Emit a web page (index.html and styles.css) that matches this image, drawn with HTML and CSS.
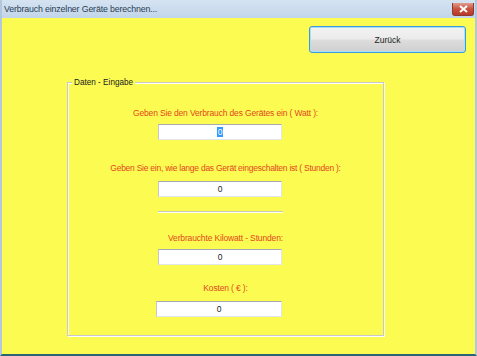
FILE: index.html
```html
<!DOCTYPE html>
<html lang="de">
<head>
    <meta charset="UTF-8">
    <title>Verbrauch einzelner Geräte berechnen...</title>
    <link rel="stylesheet" href="styles.css">
</head>
<body>
    <div class="window">
        <div class="titlebar">
            <span class="title">Verbrauch einzelner Geräte berechnen...</span>
            <button class="close">
                <svg width="9" height="8" viewBox="0 0 9 8">
                    <path d="M1 1 L8 7 M8 1 L1 7" stroke="#fff" stroke-width="2"/>
                </svg>
            </button>
        </div>
        <div class="content">
            <div class="top-row">
                <button class="btn-back">Zurück</button>
            </div>
            <div class="group">
                <span class="legend">Daten - Eingabe</span>
                <div class="label first">Geben Sie den Verbrauch des Gerätes ein ( Watt ):</div>
                <div class="field gap-small"><span class="sel">0</span></div>
                <div class="label second">Geben Sie ein, wie lange das Gerät eingeschalten ist ( Stunden ):</div>
                <div class="field">0</div>
                <div class="divider"></div>
                <div class="label after-line">Verbrauchte Kilowatt - Stunden:</div>
                <div class="field gap-small">0</div>
                <div class="label last">Kosten ( € ):</div>
                <div class="field wide">0</div>
            </div>
        </div>
    </div>
</body>
</html>
```

FILE: styles.css
```css
body {
    margin: 0;
    font-family: 'Liberation Sans', Arial, sans-serif;
}
.window {
    width: 477px;
    height: 356px;
    box-sizing: border-box;
    display: flex;
    flex-direction: column;
    background: #c9d9ea;
    border-left: 2px solid #b4c8dc;
    border-right: 2px solid #b4c8dc;
    border-bottom: 2px solid #2b6474;
}
.titlebar {
    height: 18px;
    display: flex;
    justify-content: space-between;
    align-items: flex-start;
    background: linear-gradient(#d5e3f1, #c2d5e9);
}
.title {
    font-family: 'Liberation Sans', Arial, sans-serif;
    font-size: 8.8px;
    color: #2a3d55;
    margin: 4px 0 0 2px;
    letter-spacing: -0.15px;
}
.close {
    width: 22px;
    height: 13px;
    margin: 3px 1px 0 0;
    padding: 0;
    border: 1px solid #8a3a30;
    border-top: none;
    border-radius: 0 0 3px 3px;
    background: linear-gradient(#e19c8e, #c8503c 50%, #b9382a);
    display: flex;
    align-items: center;
    justify-content: center;
}
.content {
    flex: 1;
    background: #fbfb52;
    padding: 8px 9px 0 0;
}
.top-row {
    display: flex;
    justify-content: flex-end;
}
.btn-back {
    width: 157px;
    height: 27px;
    border: 1px solid #3c9ad8;
    border-radius: 3px;
    box-shadow: inset 0 0 0 1px #a8e0f8;
    background: linear-gradient(#f3f3f3 0%, #ebebeb 48%, #dddddd 52%, #cfcfcf 100%);
    font-family: 'Liberation Sans', Arial, sans-serif;
    font-size: 8.5px;
    color: #222;
}
.group {
    position: relative;
    width: 317px;
    height: 254px;
    box-sizing: border-box;
    margin: 29px 0 0 65px;
    border: 1px solid #c8c8c8;
    box-shadow: inset 1px 1px 0 #ffffff, 1px 1px 0 #ffffff;
    display: flex;
    flex-direction: column;
    align-items: center;
}
.legend {
    position: absolute;
    top: -6px;
    left: 4px;
    padding: 0 2px;
    background: #fbfb52;
    font-size: 8.2px;
    line-height: 11px;
    color: #222;
}
.label {
    font-size: 8.5px;
    letter-spacing: -0.15px;
    line-height: 13px;
    color: #e4481e;
    margin-top: 20px;
    text-align: center;
}
.label.first {
    margin-top: 24px;
}
.label.second {
    margin-top: 22px;
    letter-spacing: -0.25px;
}
.label.after-line {
    margin-top: 20px;
}
.label.last {
    margin-top: 17px;
}
.field {
    width: 124px;
    height: 16px;
    box-sizing: border-box;
    margin: 6px 11px 0 0;
    background: #fff;
    border: 1px solid #e2e6ea;
    border-top-color: #a6a9ae;
    border-left-color: #c4c7cc;
    font-size: 8.5px;
    line-height: 14px;
    text-align: center;
    color: #222;
}
.field.gap-small {
    margin-top: 4px;
}
.field.wide {
    width: 126px;
    margin-right: 13px;
}
.sel {
    background: #3399ff;
    color: #fff;
    padding: 0 1px;
}
.divider {
    width: 125px;
    height: 1px;
    margin: 14px 11px 0 0;
    background: #c8c8b4;
    box-shadow: 0 1px 0 #ffffff;
}
```
